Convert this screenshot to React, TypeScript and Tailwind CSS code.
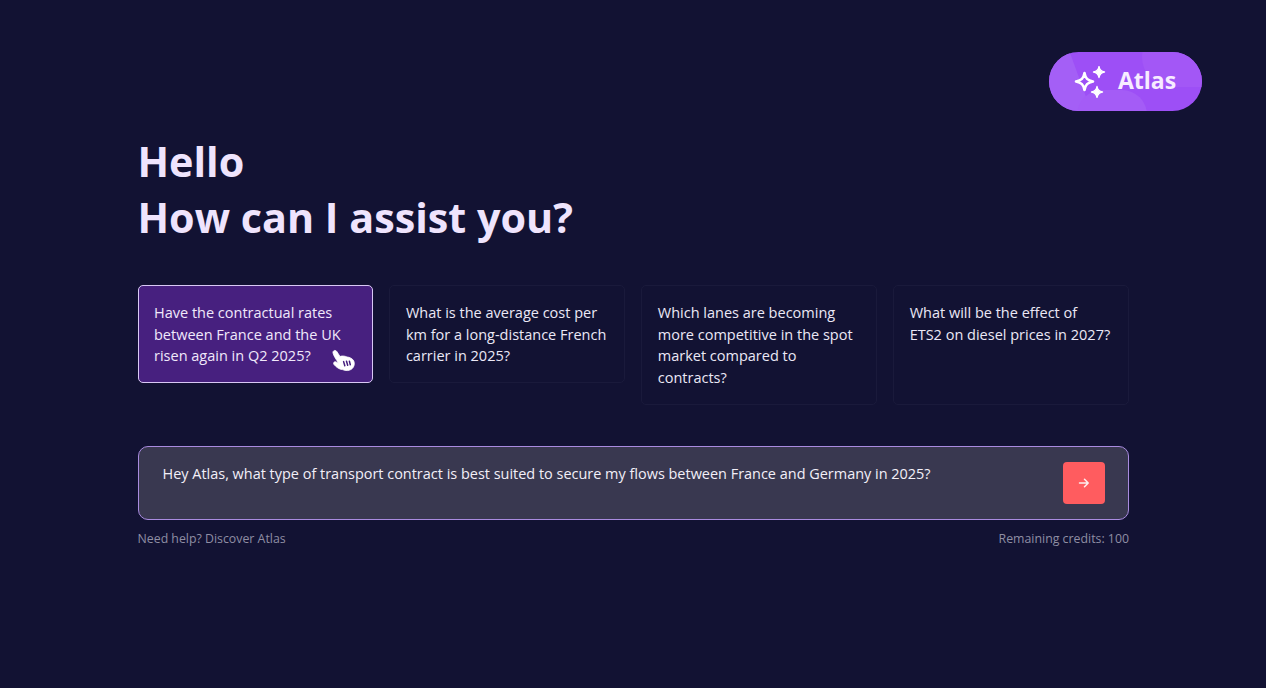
const questions = [
  'Have the contractual rates between France and the UK risen again in Q2 2025?',
  'What is the average cost per km for a long-distance French carrier in 2025?',
  'Which lanes are becoming more competitive in the spot market compared to contracts?',
  'What will be the effect of ETS2 on diesel prices in 2027?',
]

function Sparkles() {
  return (
    <svg width="32" height="32" viewBox="0 0 32 32" fill="none" className="relative shrink-0">
      <path
        d="M10.5 7 C11.5 12.5 13.5 14.5 19 15.5 C13.5 16.5 11.5 18.5 10.5 24 C9.5 18.5 7.5 16.5 2 15.5 C7.5 14.5 9.5 12.5 10.5 7 Z"
        stroke="white"
        strokeWidth="2.6"
        strokeLinejoin="round"
      />
      <path d="M25 0.5 C25.6 4 27 5.4 30.5 6 C27 6.6 25.6 8 25 11.5 C24.4 8 23 6.6 19.5 6 C23 5.4 24.4 4 25 0.5 Z" fill="white" stroke="white" strokeWidth="1.4" strokeLinejoin="round" />
      <path d="M23 20.5 C23.6 24 25 25.4 28.5 26 C25 26.6 23.6 28 23 31.5 C22.4 28 21 26.6 17.5 26 C21 25.4 22.4 24 23 20.5 Z" fill="white" stroke="white" strokeWidth="1.4" strokeLinejoin="round" />
    </svg>
  )
}

function Hand() {
  return (
    <svg width="26" height="24" viewBox="0 0 26 24" className="absolute right-[15px] bottom-[9px]">
      <path
        d="M2 4 C1.5 1.5 4.5 0.5 5.8 2.5 L9 7.5 C11 6.6 14 7 16 8 C18.5 8.2 21.5 9.5 22.8 12 C24 15 23 18 21 19.8 C18.5 22 14.5 22 11.5 20.6 C8.5 20.4 5.5 18.5 3 15.5 C1.8 14 3.2 12 5.2 13 L7.4 14.2 C5.5 10.5 2.8 7.5 2 4 Z"
        fill="white"
        stroke="white"
        strokeWidth="0.8"
      />
      <path d="M12.6 12.6 L13.8 16.8 M15.5 12.2 L16.7 16.3 M18.4 12.2 L19.3 15.8" stroke="#47207f" strokeWidth="1.5" strokeLinecap="round" />
    </svg>
  )
}

export default function App() {
  return (
    <div className="flex h-[688px] w-[1266px] flex-col overflow-hidden bg-[#121233] font-['Open_Sans',sans-serif]">
      <div className="flex justify-end pt-[52px] pr-[64px]">
        <div className="relative flex h-[59px] w-[153px] items-center gap-[12px] overflow-hidden rounded-full bg-[#9d4ff6] pl-[25px]">
          <div className="absolute -left-[20px] -top-[20px] h-[100px] w-[50px] rotate-[-20deg] bg-[#a45ff6]" />
          <div className="absolute left-[28px] top-[38px] h-[50px] w-[70px] rounded-full bg-[#a45cf6]" />
          <div className="absolute -right-[30px] -top-[25px] h-[60px] w-[90px] rounded-full bg-[#a357f6]" />
          <Sparkles />
          <span className="relative -mt-[2px] text-[23px] leading-none font-bold text-[#f7ecff]">Atlas</span>
        </div>
      </div>

      <div className="ml-[137.5px] flex w-[991.5px] flex-col">
        <h1 className="mt-[22px] text-[41.3px] leading-[56px] font-bold text-[#efe4fd]">
          Hello
          <br />
          How can I assist you?
        </h1>

        <div className="mt-[40px] grid grid-cols-4 items-start gap-[16px]">
          {questions.map((q, i) => (
            <div
              key={q}
              className={
                i === 0
                  ? 'relative h-[98px] rounded-[5px] border border-[#d9c8f5] bg-[#47207f] py-[16px] pr-4 pl-[15.5px] text-[14.5px] leading-[21.6px] text-[#f0e8fb]'
                  : i === 1
                    ? 'h-[98px] rounded-[5px] border border-[#1a1a3b] py-[16px] pr-4 pl-[15.5px] text-[14.5px] leading-[21.6px] text-[#ebe8f6]'
                    : 'h-[120px] rounded-[5px] border border-[#1a1a3b] py-[16px] pr-4 pl-[15.5px] text-[14.5px] leading-[21.6px] text-[#ebe8f6]'
              }
            >
              {q}
              {i === 0 && <Hand />}
            </div>
          ))}
        </div>

        <div className="mt-[41px] flex h-[74px] justify-between rounded-[10px] border border-[#a98be0] bg-[#393850] pt-[15px] pr-[23.5px] pl-[24px]">
          <p className="pt-[1px] text-[14.46px] leading-[22px] text-[#f2eff8]">
            Hey Atlas, what type of transport contract is best suited to secure my flows between France and Germany in 2025?
          </p>
          <button className="flex h-[42px] w-[42px] shrink-0 items-center justify-center rounded-[4px] bg-[#ff5c5f]">
            <svg width="12" height="12" viewBox="0 0 12 12" fill="none" stroke="#fdeeee" strokeWidth="1.5" strokeLinecap="round" strokeLinejoin="round">
              <path d="M1.5 6 H10 M6.5 2.2 L10.2 6 L6.5 9.8" />
            </svg>
          </button>
        </div>

        <div className="mt-[10px] flex justify-between text-[12.33px] leading-[18px] text-[#8f8ea3]">
          <span>Need help? Discover Atlas</span>
          <span>Remaining credits: 100</span>
        </div>
      </div>
    </div>
  )
}
